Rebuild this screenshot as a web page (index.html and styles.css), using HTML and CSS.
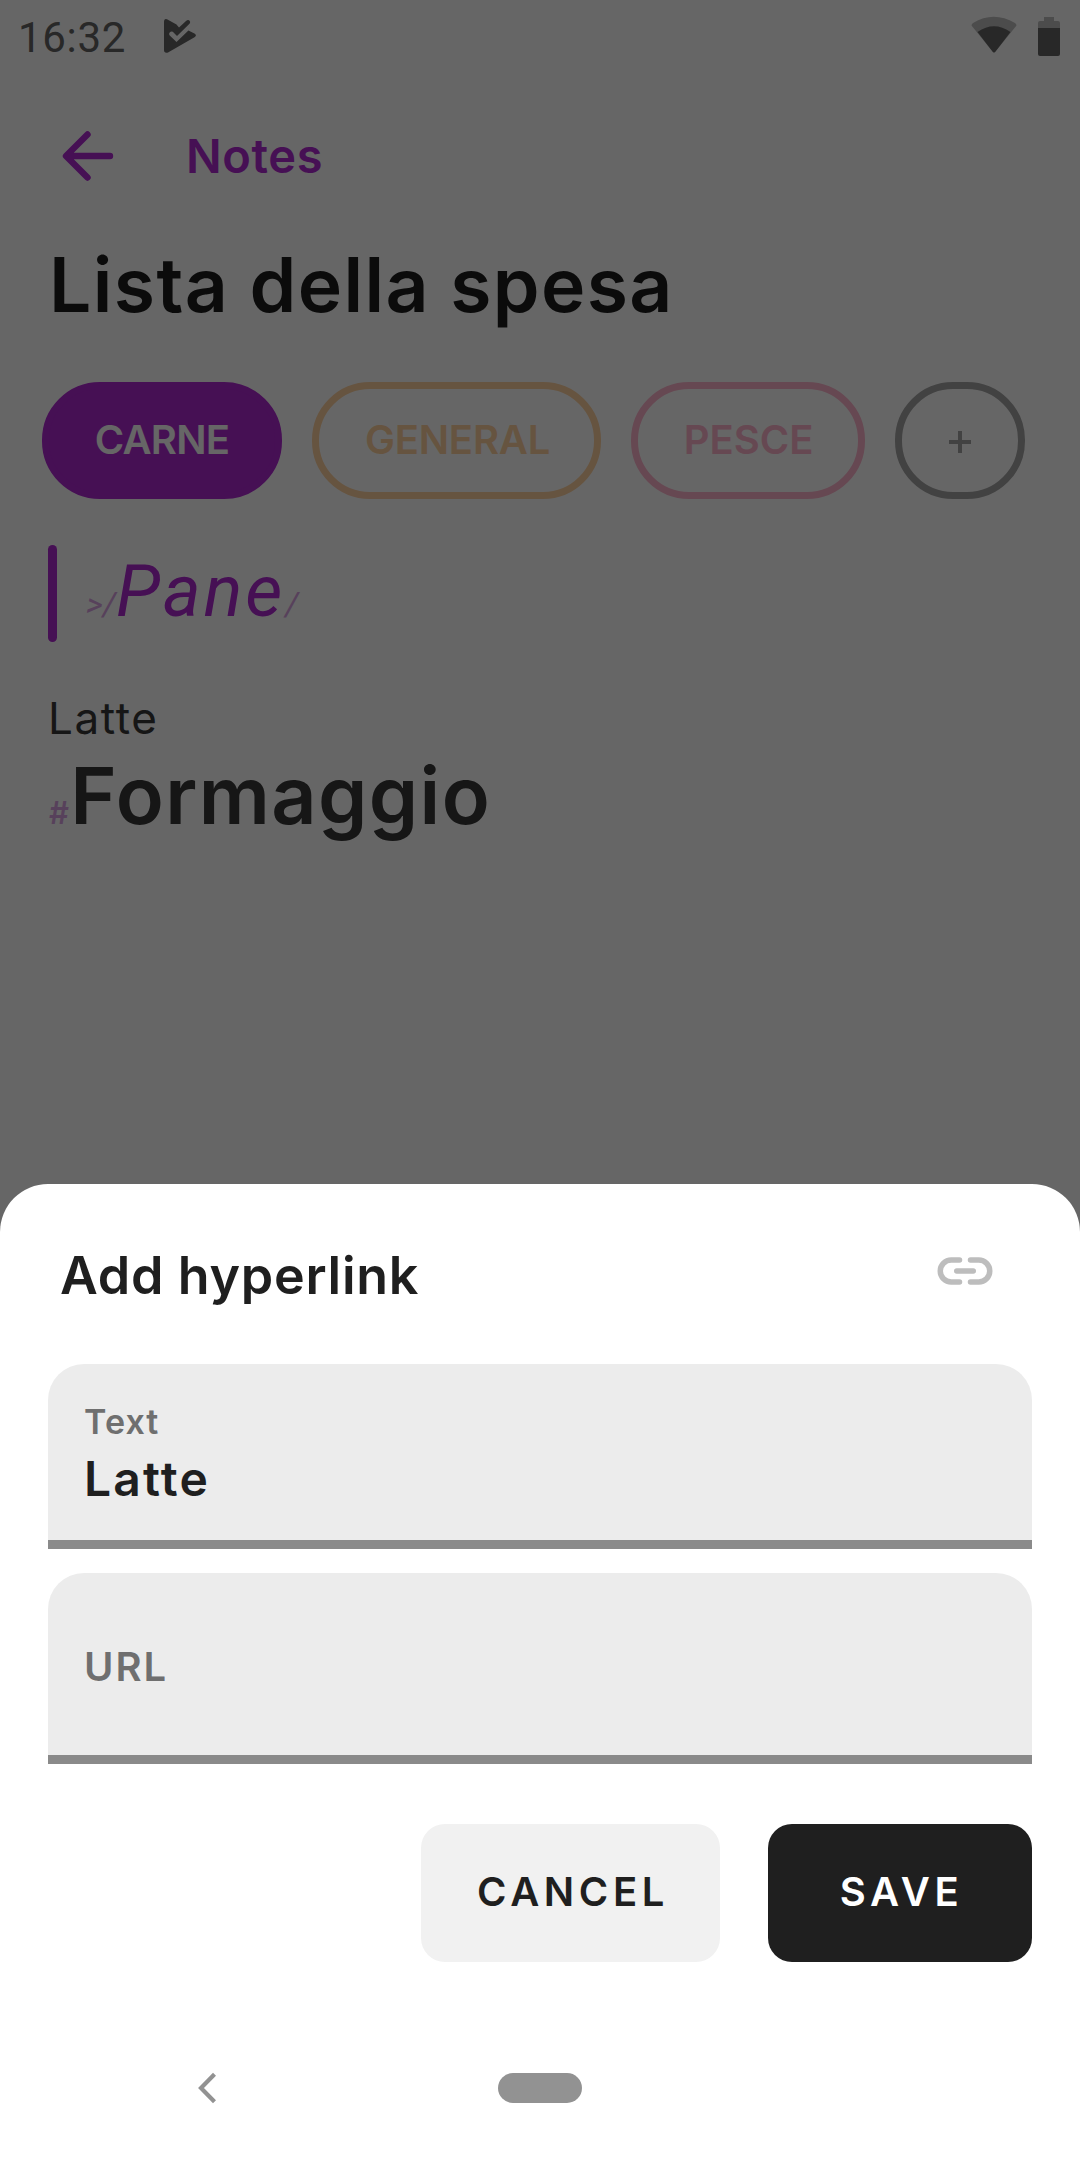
FILE: index.html
```
<!DOCTYPE html>
<html lang="en">
<head>
  <meta charset="UTF-8" />
  <meta name="viewport" content="width=device-width, initial-scale=1.0" />
  <title>Notes – Add hyperlink</title>
  <link rel="stylesheet" href="styles.css">
</head>
<body>
  <div class="screen">
    <!-- NOTE -->
    <main class="note">
      <div class="status-bar">
        <span class="clock">16:32</span>
        <svg class="play-icon" width="34" height="36" viewBox="0 0 34 36">
          <path d="M1 4Q1 .2 4 1.200L13.500 6.500L16 9.500L23 3Q25.500 1 27 3.500Q27.500 4.800 26 6.200L14 18L9.800 13.800Q8 13 6.500 14.800Q5.600 16.300 7 17.800L13.500 24L25.400 12.400L31.500 15.500Q34.400 17.300 31.500 19.200L5 34.500Q1 35.500 1 32Z" fill="#646464"/>
        </svg>
        <svg class="wifi-icon" width="46" height="38" viewBox="0 0 46 38">
          <path d="M.5 9.500Q.5 8 2 7Q22.500-5.500 44 7Q45.500 8 45.500 9.500L24.500 35.500Q23 37.500 21.500 35.500Z" fill="#bebebe"/>
          <path d="M6.500 16Q23 4.500 39.500 16L24.500 35.500Q23 37.500 21.500 35.500Z" fill="#646464"/>
        </svg>
        <svg class="battery-icon" width="22" height="39" viewBox="0 0 22 39">
          <path d="M6 0H16V4H20Q22 4 22 6V11H0V6Q0 4 2 4H6Z" fill="#bebebe"/>
          <path d="M0 11H22V37Q22 39 20 39H2Q0 39 0 37Z" fill="#646464"/>
        </svg>
      </div>

      <div class="app-bar">
        <svg width="52" height="52" viewBox="0 0 52 52" fill="none" stroke="#af28d2" stroke-width="6.400" stroke-linecap="round" stroke-linejoin="round">
          <path d="M48 26H4.500M25.500 4.500L4 26L25.500 47.500"/>
        </svg>
        <span class="app-bar-title">Notes</span>
      </div>

      <h1 class="note-title">Lista della spesa</h1>

      <div class="tags">
        <span class="tag tag-carne">CARNE</span>
        <span class="tag tag-general">GENERAL</span>
        <span class="tag tag-pesce">PESCE</span>
        <span class="tag tag-add">
          <svg width="22" height="22" viewBox="0 0 22 22" stroke="#a5a5a5" stroke-width="4"><path d="M0 11H22M11 0V22"/></svg>
        </span>
      </div>

      <div class="quote-row">
        <span class="quote-bar"></span>
        <blockquote class="quote"><span class="mark">&gt;/</span><span class="quote-text">Pane</span><span class="mark">/</span></blockquote>
      </div>
      <p class="line">Latte</p>
      <h2 class="heading"><span class="mark hash">#</span>Formaggio</h2>
    </main>

    <div class="scrim"></div>

    <!-- BOTTOM SHEET -->
    <section class="sheet">
      <div class="sheet-header">
        <h3>Add hyperlink</h3>
        <svg width="66" height="66" viewBox="0 0 24 24" fill="none" stroke="#bdbdbd" stroke-width="2" stroke-linecap="round">
          <path d="M10 8H7a4 4 0 0 0 0 8H10M14 8H17a4 4 0 0 1 0 8H14M9 12H15"/>
        </svg>
      </div>

      <div class="field field-text">
        <span class="field-label">Text</span>
        <span class="field-value">Latte</span>
      </div>
      <div class="field field-url">
        <span class="field-hint">URL</span>
      </div>

      <div class="actions">
        <button class="btn btn-cancel" type="button">CANCEL</button>
        <button class="btn btn-save" type="button">SAVE</button>
      </div>

      <div class="nav-bar">
        <svg width="20" height="32" viewBox="0 0 20 32" fill="none" stroke="#929292" stroke-width="4.200"><path d="M17.500 2.300L4 16L17.500 29.700"/></svg>
        <span class="home-pill"></span>
      </div>
    </section>
  </div>
</body>
</html>
```
FILE: styles.css
```
/* GLOBAL */
* { box-sizing:border-box; }
body { margin:0; background:#fff; color:#1f1f1f; font-family:'Inter', 'Roboto', sans-serif; font-weight:500; }
h1, h2, h3, p, blockquote { margin:0; }
svg { display:block; flex:none; }
.screen { display:grid; width:1080px; height:2160px; overflow:hidden; }
.note, .scrim, .sheet { grid-area:1 / 1; }
.scrim { background:rgba(0,0,0,0.6); }

/* STATUS BAR */
.status-bar { display:flex; align-items:center; height:72px; padding:0 20px 0 18px; }
.clock { width:145px; font:400 42px/50px 'Roboto', sans-serif; color:#646464; padding-top:3px; letter-spacing:0.7px; }
.wifi-icon { margin-left:auto; margin-right:21px; margin-top:-2px; }

/* APP BAR */
.app-bar { display:flex; align-items:center; height:168px; padding:0 0 0 62px; }
.app-bar-title { margin-left:72px; padding-bottom:2px; font-size:47px; font-weight:600; letter-spacing:0.6px; color:#af28d2; }

/* NOTE */
.note-title { padding-left:49px; font-size:75px; line-height:90px; font-weight:600; letter-spacing:1.4px; color:#1c1c1c; }
.tags { display:flex; gap:30px; padding:52px 0 0 42px; }
.tag { display:flex; align-items:center; justify-content:center; height:117px; padding-bottom:2px; border:7px solid; border-radius:58px; font-size:40px; font-weight:600; }
.tag-carne { width:240px; background:#af28d2; border-color:#af28d2; color:#fff; letter-spacing:-0.8px; }
.tag-general { width:289px; padding-left:2px; color:#ffd2a0; letter-spacing:-0.2px; }
.tag-pesce { width:234px; padding-left:1px; color:#ffb4cd; }
.tag-add { width:130px; color:#a5a5a5; padding:3px 0 0; }

.quote-row { display:flex; gap:29px; height:97px; margin:46px 0 0 48px; }
.quote-bar { width:9px; border-radius:5px; background:#af28d2; }
.quote { font-family:'Roboto', sans-serif; font-style:italic; font-weight:400; line-height:93px; color:#af28d2; }
.quote-text { font-size:72px; letter-spacing:3px; }
.mark { color:#daa2e4; font-size:33px; font-weight:400; }
.line { margin-top:48px; padding-left:48px; font-size:44px; line-height:56px; font-weight:400; letter-spacing:1.6px; color:#373737; }
.heading { padding-left:49px; font-size:79px; line-height:98px; font-weight:600; letter-spacing:1.4px; color:#373737; }
.hash { font-size:31px; font-weight:600; }

/* SHEET */
.sheet { align-self:end; height:976px; padding:0 48px; background:#fff; border-radius:48px 48px 0 0; }
.sheet-header { display:flex; justify-content:space-between; height:180px; padding:54px 34px 0 12px; }
.sheet-header h3 { font-size:52px; line-height:76px; font-weight:600; letter-spacing:0.7px; }
.field { display:flex; flex-direction:column; padding-left:36px; background:#ececec; border-bottom:9px solid #8a8a8a; border-radius:36px 36px 0 0; }
.field-text { height:185px; padding-top:37px; }
.field-url { height:191px; margin-top:24px; padding-top:4px; justify-content:center; }
.field-label { font-size:34px; line-height:42px; font-weight:600; letter-spacing:1.1px; color:#6f6f6f; }
.field-value { font-size:48px; line-height:58px; margin-top:7px; font-weight:600; letter-spacing:2.2px; }
.field-hint { font-size:40px; font-weight:600; letter-spacing:2px; color:#6f6f6f; }

/* BUTTONS */
.actions { display:flex; justify-content:flex-end; gap:48px; margin-top:60px; }
.btn { height:138px; padding:0 0 4px; border:none; border-radius:24px; font-family:inherit; font-size:40px; font-weight:600; letter-spacing:4.6px; }
.btn-cancel { width:299px; padding-left:5px; background:#f1f1f1; color:#1f1f1f; }
.btn-save { width:264px; padding-left:3px; background:#1f1f1f; color:#fff; }

/* SYSTEM NAV */
.nav-bar { display:flex; align-items:center; margin-top:110px; padding-left:149px; }
.home-pill { width:84px; height:30px; margin-left:281px; border-radius:15px; background:#929292; }
```
